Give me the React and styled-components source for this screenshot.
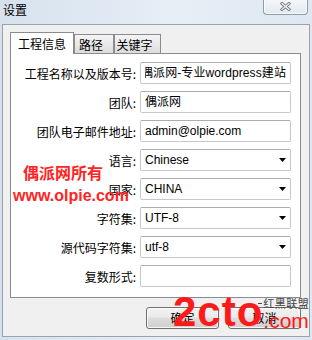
import React from "react";
import styled, { createGlobalStyle } from "styled-components";

const Global = createGlobalStyle`
  html, body { margin: 0; padding: 0; }
  body {
    width: 312px; height: 340px; overflow: hidden;
    background: #dde7f1;
    font-family: "Liberation Sans", "Noto Sans CJK SC", sans-serif;
    font-size: 12px; color: #000;
  }
  * { box-sizing: border-box; }
`;

const Window = styled.div`
  position: relative;
  width: 312px; height: 340px;
  display: flex; flex-direction: column;
  background: linear-gradient(to right, #d6e2ee 0%, #e6eef6 55%, #dfe8f2 100%);
  overflow: hidden;
`;

const TitleBar = styled.div`
  height: 24px; flex: none;
  display: flex; align-items: flex-start;
  padding: 0 4px 0 3px;
`;

const Title = styled.div`
  font-family: "Noto Sans CJK SC", sans-serif;
  font-size: 12px; line-height: 14px;
  margin-top: 3px;
`;

const CloseButton = styled.div`
  margin-left: auto; margin-top: -2px;
  width: 45px; height: 17px;
  border: 1px solid #8e9cab; border-top: none;
  border-radius: 0 0 4px 4px;
  background: linear-gradient(#f6f8fb, #e3e9f0);
  box-shadow: inset 0 0 0 1px rgba(255,255,255,0.7);
  display: flex; align-items: center; justify-content: center;
  padding-top: 1px;
`;

const Client = styled.div`
  flex: 1;
  margin: 0 2px 3px 2px;
  background: #f0f0f0;
  border: 1px solid #9aa3ac;
  display: flex; flex-direction: column;
  padding: 7px 8px 0 7px;
`;

const TabStrip = styled.div`
  height: 21px; flex: none;
  display: flex; align-items: flex-end;
  position: relative; z-index: 1;
`;

const Tab = styled.div`
  font-family: "Noto Sans CJK SC", sans-serif;
  font-size: 12px;
  border: 1px solid #898c95; border-bottom: none;
  display: flex; justify-content: center;
  ${(p) =>
    p.$active
      ? `
    height: 22px; margin-bottom: -1px; width: 64px;
    background: #fff; line-height: 19px; padding-top: 1px;
  `
      : `
    height: 19px; width: ${p.$w}px;
    background: linear-gradient(#f4f4f4, #e9e9e9 50%, #dcdcdc);
    line-height: 18px; padding-top: 1px; padding-right: 6px;
  `}
`;

const Panel = styled.div`
  height: 245px; flex: none;
  border: 1px solid #898c95;
  background: #fff;
  padding: 8px 9px 0 0;
  display: grid;
  grid-template-columns: 125px 151px;
  grid-auto-rows: 22px;
  column-gap: 4px; row-gap: 7px;
  align-content: start;
`;

const Label = styled.div`
  font-family: "Noto Sans CJK SC", sans-serif;
  font-size: 12px;
  line-height: 22px; padding-top: 1px;
  text-align: right; white-space: nowrap;
`;

const Field = styled.div`
  height: 22px;
  border: 1px solid #c5c9cf; border-top-color: #abadb3;
  border-radius: 2px;
  background: #fff;
  padding: 0 4px;
  display: flex; align-items: center;
  justify-content: ${(p) => (p.$select ? "space-between" : "flex-start")};
  font-family: "Liberation Sans", "Noto Sans CJK SC", sans-serif;
  font-size: 12px; line-height: 20px;
  overflow: hidden;
`;

const FieldText = styled.div`
  flex: 1; min-width: 0;
  overflow: hidden; white-space: nowrap;
  display: flex;
  justify-content: ${(p) => (p.$scrolled ? "flex-end" : "flex-start")};
  letter-spacing: ${(p) => (p.$scrolled ? "0.1px" : "0")};
`;

const ButtonRow = styled.div`
  display: flex; justify-content: flex-end;
  gap: 9px; margin-top: 9px;
`;

const Button = styled.div`
  width: 73px; height: 22px;
  border: 1px solid #707070; border-radius: 3px;
  background: linear-gradient(#f2f2f2 0%, #ebebeb 45%, #dddddd 50%, #cfcfcf 100%);
  box-shadow: inset 0 0 0 1px rgba(255,255,255,0.8);
  font-family: "Noto Sans CJK SC", sans-serif;
  font-size: 12px; line-height: 20px;
  display: flex; justify-content: center;
`;

const MarkCn = styled.div`
  position: absolute; left: 23px; top: 164px;
  font-family: "Noto Sans CJK SC", sans-serif;
  font-weight: 700; font-size: 16px; line-height: 16px;
  color: #ff2424; white-space: nowrap;
`;

const MarkUrl = styled.div`
  position: absolute; left: 13px; top: 188px;
  font-family: "Liberation Sans", sans-serif;
  font-weight: 700; font-size: 16px; line-height: 16px;
  color: #ff2424; white-space: nowrap;
`;

const Logo = styled.div`
  position: absolute; left: 173px; top: 292px;
  display: flex; align-items: flex-start;
  white-space: nowrap;
`;

const LogoBig = styled.div`
  font-family: "Liberation Sans", sans-serif;
  font-weight: 700; font-size: 42px; line-height: 40px;
  letter-spacing: 1px;
  color: #ff1a1a;
`;

const LogoSide = styled.div`
  display: flex; flex-direction: column; align-items: flex-start;
  margin-left: -5px; margin-top: 5px;
`;

const LogoCn = styled.div`
  font-family: "Noto Sans CJK SC", sans-serif;
  font-size: 11px; line-height: 12px;
  color: #444; letter-spacing: 0.5px;
  display: flex; align-items: center;
`;

const LogoDash = styled.span`
  display: inline-block; width: 4px; height: 1px;
  background: #444; margin-right: 1px;
`;

const LogoCom = styled.div`
  font-family: "Liberation Sans", sans-serif;
  font-size: 21px; line-height: 20px;
  color: #ff1a1a; margin-top: 2px; margin-left: 5px;
`;

const Arrow = () => (
  <svg width="7" height="4" viewBox="0 0 7 4" style={{ flex: "none" }}>
    <polygon points="0,0 7,0 3.5,4" fill="#000" />
  </svg>
);

const CloseX = () => (
  <svg width="11" height="9" viewBox="0 0 11 9">
    <path d="M2 1.5 L9 7.5 M9 1.5 L2 7.5" stroke="#7a7f86" strokeWidth="3" strokeLinecap="square" />
    <path d="M2 1.5 L9 7.5 M9 1.5 L2 7.5" stroke="#f4f6f8" strokeWidth="1.2" strokeLinecap="square" />
  </svg>
);

const rows = [
  { label: "工程名称以及版本号:", value: "偶派网-专业wordpress建站", scrolled: true },
  { label: "团队:", value: "偶派网" },
  { label: "团队电子邮件地址:", value: "admin@olpie.com" },
  { label: "语言:", value: "Chinese", select: true },
  { label: "国家:", value: "CHINA", select: true },
  { label: "字符集:", value: "UTF-8", select: true },
  { label: "源代码字符集:", value: "utf-8", select: true },
  { label: "复数形式:", value: "" },
];

export default function App() {
  return (
    <>
      <Global />
      <Window>
        <TitleBar>
          <Title>设置</Title>
          <CloseButton>
            <CloseX />
          </CloseButton>
        </TitleBar>
        <Client>
          <TabStrip>
            <Tab $active>工程信息</Tab>
            <Tab $w={40}>路径</Tab>
            <Tab $w={47}>关键字</Tab>
          </TabStrip>
          <Panel>
            {rows.map((r) => (
              <React.Fragment key={r.label}>
                <Label>{r.label}</Label>
                <Field $select={r.select}>
                  <FieldText $scrolled={r.scrolled}>{r.value}</FieldText>
                  {r.select && <Arrow />}
                </Field>
              </React.Fragment>
            ))}
          </Panel>
          <ButtonRow>
            <Button>确定</Button>
            <Button>取消</Button>
          </ButtonRow>
        </Client>
        <MarkCn>偶派网所有</MarkCn>
        <MarkUrl>www.olpie.com</MarkUrl>
        <Logo>
          <LogoBig>2cto</LogoBig>
          <LogoSide>
            <LogoCn>
              <LogoDash />
              红黑联盟
            </LogoCn>
            <LogoCom>.com</LogoCom>
          </LogoSide>
        </Logo>
      </Window>
    </>
  );
}
